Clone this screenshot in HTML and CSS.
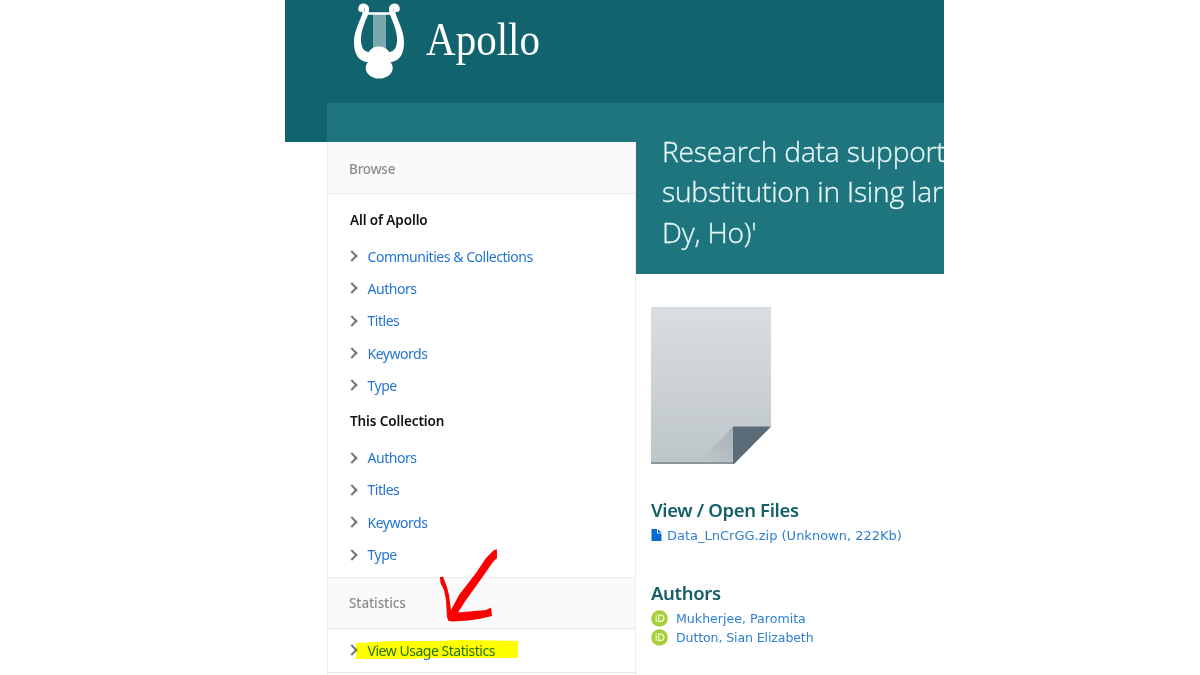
FILE: index.html
```
<!DOCTYPE html>
<html lang="en">
<head>
    <meta charset="UTF-8">
    <title>Apollo</title>
    <link rel="stylesheet" href="styles.css">
</head>
<body>
    <div class="page">
        <header class="site-header">
            <svg class="logo" width="220" height="90" viewBox="0 0 220 90">
                <path class="strings" d="M33 14h13v38H33z"/>
                <path class="lyre-line" d="M24 13.500h30"/>
                <path class="lyre" d="M28 12C26 22 21.500 28 21 38C20.500 47 24 52 29 52C31 48 35 46.500 39 46.500C43 46.500 47 48 49 52C54 52 57.500 47 57 38C56.500 28 52 22 50 12L55 11C57 20 64 30 64 42C64 54 60 60 52 62H26C18 60 14 54 14 42C14 30 21 20 23 11Z"/>
                <ellipse class="lyre" cx="39.200" cy="68" rx="13.500" ry="10.500"/>
                <circle class="lyre" cx="21.500" cy="8.800" r="3.300"/>
                <circle class="lyre" cx="56.500" cy="8.800" r="3.300"/>
                <path class="scroll" d="M21 6.500C24 4.500 27.500 6 27 10C27 12 26 14 25 17M57 6.500C54 4.500 50.500 6 51 10C51 12 52 14 53 17"/>
                <text class="logo-text" x="86" y="55" textLength="114" lengthAdjust="spacingAndGlyphs">Apollo</text>
            </svg>
        </header>
        <div class="content">
            <aside class="sidebar">
                <h2 class="panel-title">Browse</h2>
                <div class="panel">
                    <h3>All of Apollo</h3>
                    <ul>
                        <li><a>Communities &amp; Collections</a></li>
                        <li><a>Authors</a></li>
                        <li><a>Titles</a></li>
                        <li><a>Keywords</a></li>
                        <li><a>Type</a></li>
                    </ul>
                    <h3 class="second">This Collection</h3>
                    <ul>
                        <li><a>Authors</a></li>
                        <li><a>Titles</a></li>
                        <li><a>Keywords</a></li>
                        <li><a>Type</a></li>
                    </ul>
                </div>
                <h2 class="panel-title stats-title">Statistics</h2>
                <ul class="stats">
                    <li><a>View Usage Statistics</a></li>
                </ul>
                <svg class="marker" width="170" height="130" viewBox="0 0 170 130">
                    <path class="highlight" d="M1 97L40 95L82 95L103 94L163 95V112H82L50 113L1 113Z"/>
                    <path class="arrow" d="M139 4L142 3.500V12L138 16L124 36L111 54L103 66.500L131 64L136 61.500L137 70L124 73L113 74.500L98 75.500L93.500 75L92 71L91 54L89 44L85.500 37L85 31L88 30.700L92 41L94 49L96 64L104 49L121 27L131 12Z"/>
                </svg>
            </aside>
            <main class="main">
                <h1>Research data support<br>substitution in Ising lar<br>Dy, Ho)'</h1>
                <div class="item">
                    <svg class="thumb" width="121" height="158" viewBox="0 0 121 158">
                        <defs>
                            <linearGradient id="paper" x1="0" y1="0" x2="0" y2="1">
                                <stop offset="0" stop-color="#d9dfe0"/>
                                <stop offset="1" stop-color="#bec5c9"/>
                            </linearGradient>
                            <linearGradient id="shade" x1="1" y1="0" x2="0.3" y2="1">
                                <stop offset="0" stop-color="#a8b0b6"/>
                                <stop offset="1" stop-color="#bec5c9"/>
                            </linearGradient>
                        </defs>
                        <path fill="url(#paper)" d="M0 0H120V120L83 157H0Z"/>
                        <path fill="url(#shade)" d="M82 120V156H47Z"/>
                        <path fill="#8b959b" d="M0 155H83V157H0Z"/>
                        <path fill="#5b6b78" d="M82 119.500H120L83 157H82Z"/>
                    </svg>
                    <h2 class="view">View / Open Files</h2>
                    <p class="file">
                        <svg width="11" height="12" viewBox="0 0 11 12"><path fill="#0a6bce" d="M0.500 0H6V4.500H10.500V12H0.500ZM7 0L10.500 3.700H7Z"/></svg>
                        <a>Data_LnCrGG.zip (Unknown, 222Kb)</a>
                    </p>
                    <h2 class="authors">Authors</h2>
                    <p class="author">
                        <svg width="17" height="17" viewBox="0 0 17 17"><circle cx="8.500" cy="8.500" r="8.300" fill="#a6ce39"/><path class="orcid" d="M5.200 6.500V12M5.200 4V5.200M7.700 5.200H9.500C14 5.200 14 11.500 9.500 11.500H7.700Z"/></svg>
                        <a>Mukherjee, Paromita</a>
                    </p>
                    <p class="author">
                        <svg width="17" height="17" viewBox="0 0 17 17"><circle cx="8.500" cy="8.500" r="8.300" fill="#a6ce39"/><path class="orcid" d="M5.200 6.500V12M5.200 4V5.200M7.700 5.200H9.500C14 5.200 14 11.500 9.500 11.500H7.700Z"/></svg>
                        <a class="long-name">Dutton, Sian Elizabeth</a>
                    </p>
                </div>
            </main>
        </div>
    </div>
</body>
</html>
```
FILE: styles.css
```
* {
    box-sizing: border-box;
}
body {
    margin: 0;
    background: #fff;
    font-family: "Noto Sans", "Open Sans", sans-serif;
    overflow: hidden;
}
h1, h2, h3, p, ul {
    margin: 0;
    padding: 0;
}
.page {
    width: 659px;
    height: 675px;
    margin-left: 285px;
    overflow: hidden;
    background: linear-gradient(#11636d 142px, #fff 142px);
}
.site-header {
    height: 103px;
    padding-left: 55px;
}
.logo {
    display: block;
}
.lyre {
    fill: #fff;
}
.scroll {
    fill: none;
    stroke: #fff;
    stroke-width: 4;
    stroke-linecap: round;
}
.strings {
    fill: #79a9ae;
}
.lyre-line {
    stroke: #fff;
    stroke-width: 2.5;
}
.logo-text {
    font-family: "Liberation Serif", serif;
    font-size: 47px;
    fill: #fff;
}
.content {
    display: flex;
    margin-left: 42px;
    height: 572px;
}
.sidebar {
    position: relative;
    width: 309px;
    border-top: 39px solid #1f757e;
    background: #fff;
    box-shadow: inset 1px 0 #eee, inset -1px 0 #eee;
}
.panel-title {
    height: 52px;
    margin: 0 1px;
    padding-left: 21px;
    line-height: 54px;
    background: #fafafa;
    border-bottom: 1px solid #eaeaea;
    color: #8c8c8c;
    font-size: 13.5px;
    font-weight: 500;
    letter-spacing: -0.2px;
}
.panel {
    height: 383px;
    padding: 14px 0 0 23px;
}
.panel h3 {
    height: 32px;
    line-height: 25px;
    font-size: 13.5px;
    font-weight: 600;
    letter-spacing: -0.1px;
    color: #111;
}
.panel h3.second {
    margin-top: 8px;
}
ul {
    list-style: none;
}
li {
    display: flex;
    align-items: center;
    height: 32.3px;
    color: #2474cf;
    font-size: 14px;
    letter-spacing: -0.47px;
}
li::before {
    content: "";
    width: 6px;
    height: 6px;
    margin: 0 12px 0 -2.5px;
    border: solid #777;
    border-width: 2px 2px 0 0;
    transform: rotate(45deg);
}
.stats-title {
    line-height: 51px;
    letter-spacing: -0.1px;
    border-top: 1px solid #eaeaea;
}
.stats {
    height: 44px;
    padding: 5px 0 0 23px;
    border-bottom: 1px solid #e5eaec;
}
.marker {
    position: absolute;
    left: 28px;
    top: 404px;
    mix-blend-mode: multiply;
}
.highlight {
    fill: #ff0;
}
.arrow {
    fill: #f00;
}
.main {
    width: 308px;
}
h1 {
    height: 171px;
    padding: 28px 0 0 26px;
    background: #1f757e;
    color: #e6f7f8;
    font-family: "Open Sans", sans-serif;
    font-size: 28.2px;
    font-weight: 300;
    line-height: 40.3px;
    white-space: nowrap;
    letter-spacing: -0.2px;
    -webkit-text-stroke: 0.3px #e6f7f8;
}
.item {
    padding: 33px 0 0 15px;
}
.thumb {
    display: block;
}
.item h2 {
    height: 25px;
    margin-top: 32px;
    line-height: 26px;
    color: #145f68;
    font-size: 18.5px;
    font-weight: 600;
    letter-spacing: -0.35px;
}
.item p {
    display: flex;
    align-items: center;
    color: #2d7fd2;
    font-family: "DejaVu Sans", sans-serif;
    font-size: 13px;
}
.file {
    height: 26px;
    gap: 5px;
}
.item .authors {
    height: 29px;
}
.item .author {
    height: 19px;
    gap: 8px;
    font-size: 12.6px;
}
.long-name {
    letter-spacing: -0.13px;
}
.orcid {
    fill: none;
    stroke: #f1f8d8;
    stroke-width: 1.3;
}
```
